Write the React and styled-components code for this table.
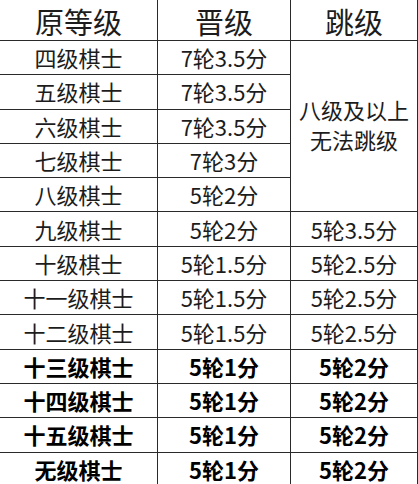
import React from 'react'
import styled, { createGlobalStyle } from 'styled-components'

const GlobalStyle = createGlobalStyle`
  html, body {
    margin: 0;
    padding: 0;
    background: #fff;
  }
`

const rows = [
  ['四级棋士', '7轮3.5分'],
  ['五级棋士', '7轮3.5分'],
  ['六级棋士', '7轮3.5分'],
  ['七级棋士', '7轮3分'],
  ['八级棋士', '5轮2分'],
  ['九级棋士', '5轮2分', '5轮3.5分'],
  ['十级棋士', '5轮1.5分', '5轮2.5分'],
  ['十一级棋士', '5轮1.5分', '5轮2.5分'],
  ['十二级棋士', '5轮1.5分', '5轮2.5分'],
  ['十三级棋士', '5轮1分', '5轮2分', true],
  ['十四级棋士', '5轮1分', '5轮2分', true],
  ['十五级棋士', '5轮1分', '5轮2分', true],
  ['无级棋士', '5轮1分', '5轮2分', true],
]

function App() {
  return (
    <>
      <GlobalStyle />
      <Table>
        <HeadCell>原等级</HeadCell>
        <HeadCell>晋级</HeadCell>
        <HeadCell>跳级</HeadCell>
        {rows.map(([grade, up, jump, bold], i) => (
          <React.Fragment key={grade}>
            <Cell $bold={bold}>{grade}</Cell>
            <Cell $bold={bold}>{up}</Cell>
            {i === 0 && (
              <MergedCell>
                八级及以上
                <br />
                无法跳级
              </MergedCell>
            )}
            {jump && <Cell $bold={bold}>{jump}</Cell>}
          </React.Fragment>
        ))}
      </Table>
    </>
  )
}

const Table = styled.div`
  display: grid;
  grid-template-columns: 158px 133px 127px;
  grid-template-rows: 41px repeat(13, 34.3px);
  width: 418px;
  font-family: "Noto Sans CJK SC", "Noto Sans", sans-serif;
  color: #1c1c1c;
`

const Cell = styled.div`
  display: flex;
  align-items: center;
  justify-content: center;
  box-sizing: border-box;
  border-right: 1px solid #2a2a2a;
  border-bottom: 1px solid #2a2a2a;
  font-size: 22px;
  line-height: 26px;
  font-weight: ${p => (p.$bold ? 700 : 400)};
  color: ${p => (p.$bold ? '#000' : '#1c1c1c')};
  padding-bottom: 1px;
  white-space: nowrap;
`

const HeadCell = styled(Cell)`
  font-size: 29px;
  line-height: 32px;
  padding-top: 2px;
  padding-bottom: 0;
`

const MergedCell = styled(Cell)`
  grid-row: span 5;
  text-align: center;
  line-height: 30px;
  padding-bottom: 4px;
`

export default App
